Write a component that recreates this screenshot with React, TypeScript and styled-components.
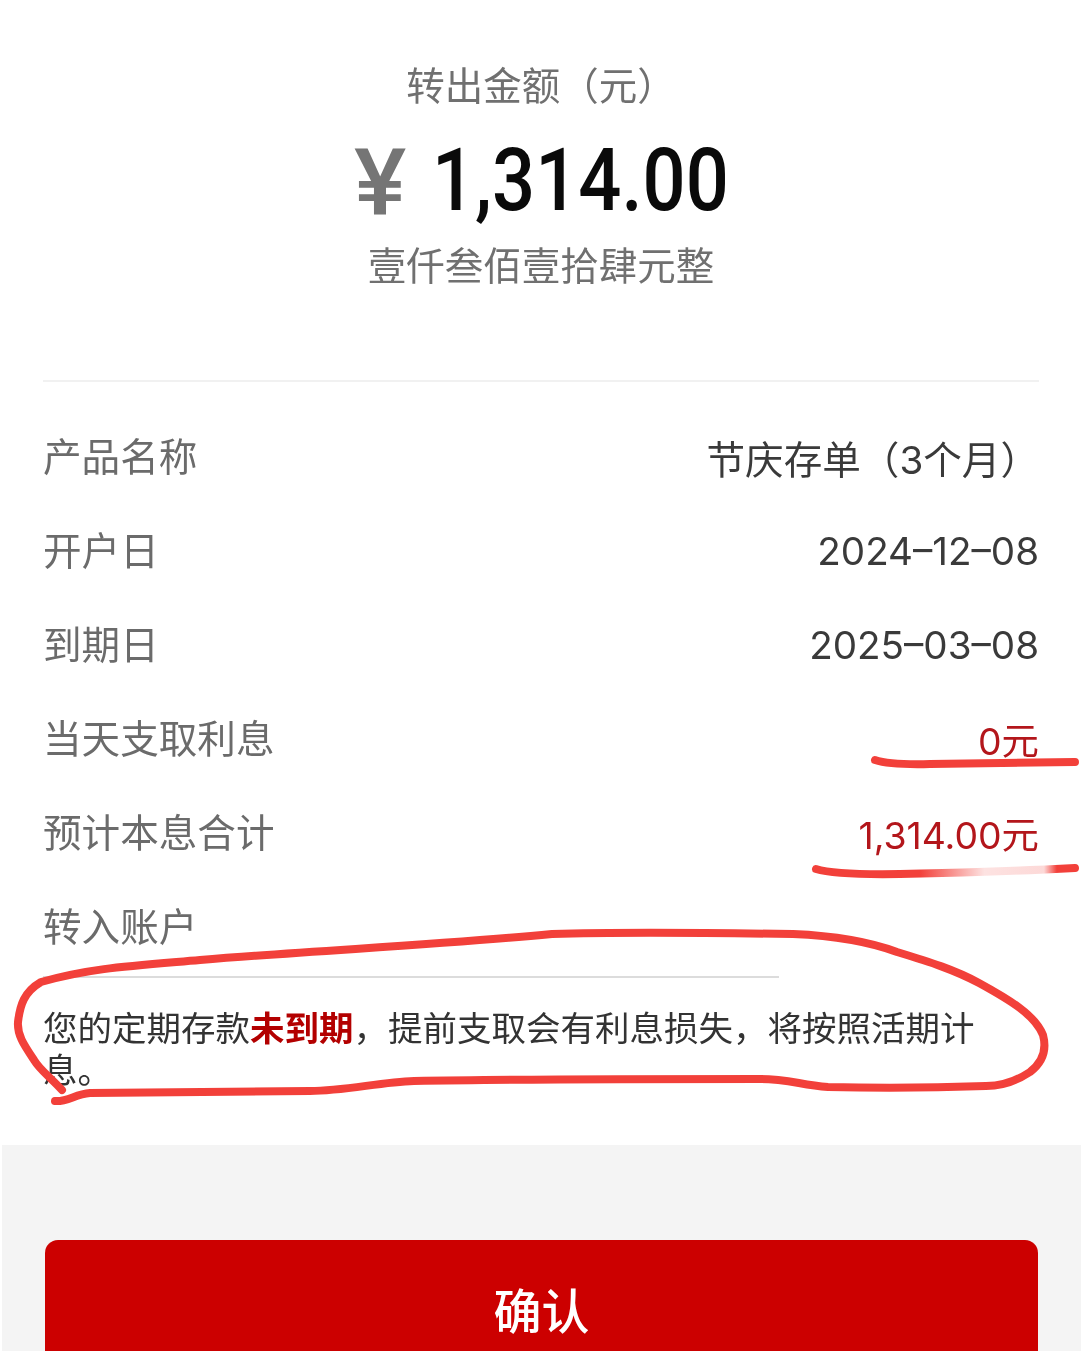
import React from "react";
import styled, { createGlobalStyle } from "styled-components";

const CJK = `"Noto Sans CJK SC", "Noto Sans", sans-serif`;

const GlobalStyle = createGlobalStyle`
  html, body {
    margin: 0;
    padding: 0;
    background: #fff;
  }
  body {
    font-family: ${CJK};
  }
`;

const Page = styled.div`
  position: relative;
  width: 1081px;
  height: 1351px;
  overflow: hidden;
  background: #fff;
  display: flex;
  flex-direction: column;
  filter: blur(0.4px);
`;

const Summary = styled.section`
  flex-shrink: 0;
  height: 382px;
  margin: 0 42px 0 43px;
  box-sizing: border-box;
  border-bottom: 2px solid #f1f1f1;
  display: flex;
  flex-direction: column;
  align-items: center;
  padding-top: 55px;
`;

const SummaryLabel = styled.div`
  font-size: 38.5px;
  line-height: 56px;
  color: #707070;
  white-space: nowrap;
`;

const Amount = styled.div`
  display: flex;
  align-items: center;
  height: 96px;
  margin-top: 21px;
  margin-left: -4px;
`;

const Yen = styled.span`
  display: inline-block;
  font-family: "Roboto", sans-serif;
  font-weight: 500;
  font-size: 93px;
  line-height: 96px;
  padding-top: 8px;
  color: #757575;
  width: 78px;
  transform: scaleX(1.06);
  transform-origin: left center;
`;

const Figure = styled.span`
  display: inline-block;
  font-family: "Roboto", sans-serif;
  font-weight: 500;
  font-size: 87px;
  line-height: 96px;
  color: #0a0a0a;
  width: 292px;
  white-space: nowrap;
  transform: scaleX(0.872);
  transform-origin: left center;
`;

const Capital = styled(SummaryLabel)`
  margin-top: 7px;
`;

const Rows = styled.section`
  flex-shrink: 0;
  padding: 25px 42px 0 43px;
  display: flex;
  flex-direction: column;
`;

const Row = styled.div`
  display: flex;
  justify-content: space-between;
  align-items: center;
  height: 94px;
`;

const RowLabel = styled.span`
  font-size: 38.6px;
  color: #6b6b6b;
`;

const RowValue = styled.span<{ $red?: boolean }>`
  font-family: "Inter", ${CJK};
  font-size: ${(p) => (p.$red ? "37.4px" : "38.6px")};
  padding-top: 5px;
  color: ${(p) => (p.$red ? "#b3161b" : "#3a3a3a")};
  white-space: nowrap;
`;

const Notice = styled.section`
  flex-shrink: 0;
  margin: 0 0 0 43px;
  height: 174px;
`;

const FadeRule = styled.div`
  width: 736px;
  height: 2px;
  background: #dcdcdc;
  margin-top: 5px;
`;

const NoticeText = styled.p`
  margin: 27px 0 0;
  width: 950px;
  font-size: 34.5px;
  line-height: 42px;
  color: #333;
`;

const Strong = styled.b`
  color: #b30000;
  font-weight: 700;
`;

const Footer = styled.footer`
  flex: 1;
  margin-left: 2px;
  background: #f4f4f4;
  padding: 95px 43px 0 43px;
`;

const Confirm = styled.button`
  display: block;
  width: 100%;
  height: 160px;
  border: 0;
  border-radius: 13px;
  padding: 0 0 24px;
  background: #cc0000;
  color: #fff;
  font-family: ${CJK};
  font-size: 48px;
  font-weight: 500;
`;

const Marks = styled.svg`
  position: absolute;
  left: 0;
  top: 0;
  pointer-events: none;
`;

const rows: { label: string; value?: string; red?: boolean }[] = [
  { label: "产品名称", value: "节庆存单（3个月）" },
  { label: "开户日", value: "2024–12–08" },
  { label: "到期日", value: "2025–03–08" },
  { label: "当天支取利息", value: "0元", red: true },
  { label: "预计本息合计", value: "1,314.00元", red: true },
  { label: "转入账户" },
];

export default function App() {
  return (
    <Page>
      <GlobalStyle />
      <Summary>
        <SummaryLabel>转出金额（元）</SummaryLabel>
        <Amount>
          <Yen>¥</Yen>
          <Figure>1,314.00</Figure>
        </Amount>
        <Capital>壹仟叁佰壹拾肆元整</Capital>
      </Summary>
      <Rows>
        {rows.map((r) => (
          <Row key={r.label}>
            <RowLabel>{r.label}</RowLabel>
            {r.value && <RowValue $red={r.red}>{r.value}</RowValue>}
          </Row>
        ))}
      </Rows>
      <Notice>
        <FadeRule />
        <NoticeText>
          您的定期存款<Strong>未到期</Strong>，提前支取会有利息损失，将按照活期计息。
        </NoticeText>
      </Notice>
      <Footer>
        <Confirm>确认</Confirm>
      </Footer>
      <Marks width="1081" height="1351" viewBox="0 0 1081 1351" fill="none">
        <defs>
          <linearGradient id="fade" gradientUnits="userSpaceOnUse" x1="816" y1="0" x2="1075" y2="0">
            <stop offset="0" stopColor="#f2403a" />
            <stop offset="0.4" stopColor="#f2403a" />
            <stop offset="0.65" stopColor="#f2403a" stopOpacity="0.15" />
            <stop offset="0.88" stopColor="#f2403a" stopOpacity="0.2" />
            <stop offset="0.93" stopColor="#f2403a" />
          </linearGradient>
        </defs>
        <path
          d="M875 760 Q890 765 930 764 L1075 762"
          stroke="#f2403a"
          strokeWidth="8"
          strokeLinecap="round"
        />
        <path
          d="M816 869 Q835 875 900 874 Q1000 872 1075 868"
          stroke="url(#fade)"
          strokeWidth="8"
          strokeLinecap="round"
        />
        <path
          d="M62 1090 C48 1075 40 1070 34 1060 C24 1045 17 1035 18 1022 C20 1005 24 992 41 982 C90 968 130 966 200 960 C320 950 440 945 552 934 C620 932 720 933 793 934 C840 936 870 942 897 952 C930 962 955 970 979 983 C1010 1000 1035 1015 1043 1035 C1047 1050 1043 1062 1030 1072 C1015 1082 1000 1086 986 1086 C930 1088 870 1088 828 1087 C800 1085 790 1079 760 1079 C650 1079 520 1079 414 1081 C380 1082 345 1091 310 1091 C230 1092 160 1093 90 1093 C75 1094 68 1102 55 1101"
          stroke="#f2403a"
          strokeWidth="8"
          strokeLinecap="round"
          strokeLinejoin="round"
        />
      </Marks>
    </Page>
  );
}
